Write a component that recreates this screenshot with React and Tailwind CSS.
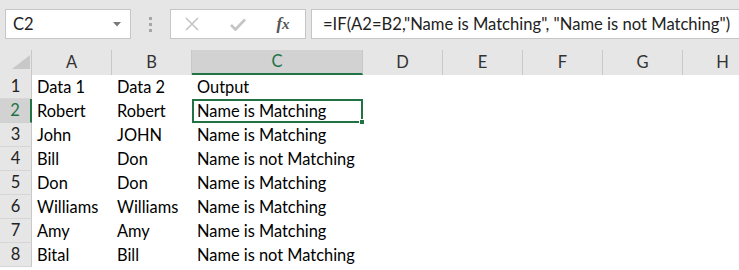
import React from "react";

const cols = ["A", "B", "C", "D", "E", "F", "G", "H"];
const rows = [
  ["Data 1", "Data 2", "Output"],
  ["Robert", "Robert", "Name is Matching"],
  ["John", "JOHN", "Name is Matching"],
  ["Bill", "Don", "Name is not Matching"],
  ["Don", "Don", "Name is Matching"],
  ["Williams", "Williams", "Name is Matching"],
  ["Amy", "Amy", "Name is Matching"],
  ["Bital", "Bill", "Name is not Matching"],
];

const font = { fontFamily: "Lato, 'Liberation Sans', sans-serif" };

export default function App() {
  return (
    <div className="w-[739px] h-[270px] overflow-hidden bg-white text-[16.4px]" style={font}>
      {/* Toolbar */}
      <div className="h-[50px] bg-[#e6e6e6] flex items-start pt-[9px] pl-[5px]">
        <div className="w-[126px] h-[30px] bg-white border border-[#c6c6c6] flex items-center justify-between pl-[7px] pr-[9px]">
          <span className="text-[#222] text-[16.5px]">C2</span>
          <svg width="8" height="5" viewBox="0 0 8 5"><path d="M0 0 L8 0 L4 4.5 Z" fill="#7a7a7a" /></svg>
        </div>
        <div className="w-[39px] h-[30px] flex flex-col items-center justify-center gap-[3px]">
          <div className="w-[3px] h-[3px] bg-[#a6a6a6]" />
          <div className="w-[3px] h-[3px] bg-[#a6a6a6]" />
          <div className="w-[3px] h-[3px] bg-[#a6a6a6]" />
        </div>
        <div className="w-[136px] h-[30px] bg-white border border-[#c6c6c6] flex items-center">
          <div className="w-[42px] flex justify-center">
            <svg width="14" height="14" viewBox="0 0 14 14"><path d="M1 1 L13 13 M13 1 L1 13" stroke="#c4c4c4" strokeWidth="1.6" /></svg>
          </div>
          <div className="w-[50px] flex justify-center">
            <svg width="16" height="13" viewBox="0 0 16 13"><path d="M1 7 L5.5 11.5 L15 1.5" stroke="#c4c4c4" strokeWidth="2.6" fill="none" /></svg>
          </div>
          <div className="w-[40px] flex justify-center">
            <span className="text-[#555] text-[17px] italic font-bold" style={{ fontFamily: "'Liberation Serif', serif" }}>
              f<span className="text-[15px]">x</span>
            </span>
          </div>
        </div>
        <div className="ml-[5px] flex-1 h-[30px] bg-white border border-[#c6c6c6] border-r-0 flex items-center pl-[11px] whitespace-nowrap text-[#222] text-[16.6px]">
          =IF(A2=B2,"Name is Matching", "Name is not Matching")
        </div>
      </div>

      {/* Grid */}
      <div className="grid grid-cols-[32px_80px_80px_171px_80px_80px_80px_80px_80px] grid-rows-[25px_repeat(8,24px)]">
        <div className="bg-[#e6e6e6] border-r border-[#c8c8c8] relative">
          <svg className="absolute left-[10px] top-[5px]" width="20" height="14" viewBox="0 0 20 14">
            <path d="M20 0 L20 14 L2 14 Z" fill="#c8c8c8" />
          </svg>
        </div>
        {cols.map((c) => (
          <div
            key={c}
            className={
              c === "C"
                ? "bg-[#d2d2d2] border-r border-[#c8c8c8] border-b-2 border-b-[#217346] flex items-center justify-center text-[#217346] text-[16.5px]"
                : "bg-[#e6e6e6] border-r border-[#c8c8c8] flex items-center justify-center text-[#333] text-[16.5px]"
            }
          >
            {c}
          </div>
        ))}
        {rows.map((r, i) => (
          <React.Fragment key={i}>
            <div
              className={
                i === 1
                  ? "bg-[#d2d2d2] border-b border-[#cfcfcf] border-r-2 border-r-[#217346] flex items-center justify-center text-[#217346] text-[16.5px]"
                  : "bg-[#e6e6e6] border-b border-[#d6d6d6] border-r border-r-[#c8c8c8] flex items-center justify-center text-[#222] text-[16.5px]"
              }
            >
              {i + 1}
            </div>
            <div className="flex items-center pl-[5px] text-black whitespace-nowrap">{r[0]}</div>
            <div className="flex items-center pl-[5px] text-black whitespace-nowrap">{r[1]}</div>
            <div
              className={
                i === 1
                  ? "relative flex items-center pl-[3px] text-black whitespace-nowrap border-2 border-[#217346]"
                  : "flex items-center pl-[5px] text-black whitespace-nowrap"
              }
            >
              {r[2]}
              {i === 1 && (
                <div className="absolute right-[-4px] bottom-[-4px] w-[6px] h-[6px] bg-[#217346] border border-white" />
              )}
            </div>
            <div />
            <div />
            <div />
            <div />
            <div />
          </React.Fragment>
        ))}
      </div>
    </div>
  );
}
